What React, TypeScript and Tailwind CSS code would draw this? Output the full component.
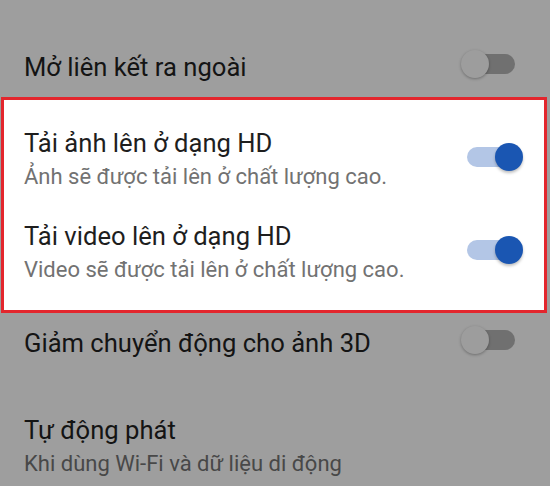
const font = { fontFamily: 'Roboto, "Noto Sans", sans-serif' };

function Toggle({ on, dim }: { on: boolean; dim?: boolean }) {
  return (
    <div className="relative w-[62px] h-[30px] shrink-0">
      <div
        className={
          'absolute left-[6px] top-[5px] w-[48px] h-[20px] rounded-full ' +
          (on ? 'bg-[#b3c6e6]' : dim ? 'bg-[#707070]' : 'bg-[#bdbdbd]')
        }
      />
      <div
        className={
          'absolute top-px w-[28px] h-[28px] rounded-full ' +
          (on
            ? 'right-0 bg-[#1a56b2] shadow-[0_2px_3px_rgba(0,0,0,0.25)]'
            : 'left-0 bg-[#9d9d9d] shadow-[0_1px_3px_rgba(0,0,0,0.3)]')
        }
      />
    </div>
  );
}

function Row({
  title,
  sub,
  toggle,
  dim,
  className,
}: {
  title: string;
  sub?: string;
  toggle?: 'on' | 'off';
  dim?: boolean;
  className?: string;
}) {
  return (
    <div className={'flex items-center justify-between ' + (className ?? '')}>
      <div className="flex flex-col">
        <div
          className={
            'text-[25.6px] leading-[32px] ' + (dim ? 'text-[#141414]' : 'text-[#1e1e1e]')
          }
        >
          {title}
        </div>
        {sub && (
          <div
            className={
              'mt-[4px] text-[22px] leading-[28px] ' +
              (dim ? 'text-[#484848]' : 'text-[#727272]')
            }
          >
            {sub}
          </div>
        )}
      </div>
      {toggle && (
        <div className="mb-[5px]">
          <Toggle on={toggle === 'on'} dim={dim} />
        </div>
      )}
    </div>
  );
}

export default function App() {
  return (
    <div className="w-[550px] h-[486px] bg-[#9e9e9e] overflow-hidden" style={font}>
      <Row
        title="Mở liên kết ra ngoài"
        toggle="off"
        dim
        className="pt-[49px] pb-[13px] pl-6 pr-[27px]"
      />

      <div className="ml-px mr-[3px] border-[3px] border-[#e3262d] bg-white py-3">
        <Row
          title="Tải ảnh lên ở dạng HD"
          sub="Ảnh sẽ được tải lên ở chất lượng cao."
          toggle="on"
          className="pt-[15px] pb-[14px] pl-5 pr-[21px]"
        />
        <Row
          title="Tải video lên ở dạng HD"
          sub="Video sẽ được tải lên ở chất lượng cao."
          toggle="on"
          className="pt-[15px] pb-[14px] pl-5 pr-[21px]"
        />
      </div>

      <Row
        title="Giảm chuyển động cho ảnh 3D"
        toggle="off"
        dim
        className="pt-[12px] pl-6 pr-[27px]"
      />
      <Row
        title="Tự động phát"
        sub="Khi dùng Wi-Fi và dữ liệu di động"
        dim
        className="pt-[54px] pl-6 pr-[27px]"
      />
    </div>
  );
}
